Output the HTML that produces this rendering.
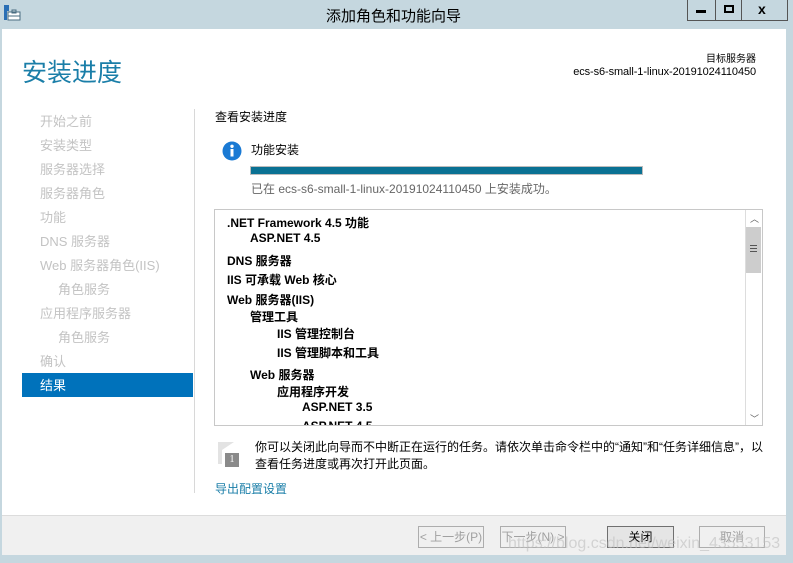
<!DOCTYPE html>
<html><head><meta charset="utf-8"><style>
*{margin:0;padding:0;box-sizing:border-box}
body{width:793px;height:563px;background:#c5d7df;position:relative;overflow:hidden;font-family:"Liberation Sans","Noto Sans CJK SC",sans-serif;font-size:12px;color:#000}
.a{position:absolute;white-space:nowrap}
#client{position:absolute;left:2px;top:29px;width:784px;height:526px;background:#fff}
#footer{position:absolute;left:2px;top:515px;width:784px;height:40px;background:#f0f0f0;border-top:1px solid #dcdcdc}
.nav{position:absolute;left:40px;font-size:13px;color:#c3c3c3;line-height:16px}
.btn{position:absolute;top:526px;height:22px;border:1px solid #adadad;background:#f0f0f0;font-size:12px;text-align:center;line-height:20px;color:#a0a0a0}
.t{position:absolute;font-weight:bold;font-size:12px;white-space:nowrap}
</style></head><body>
<svg class="a" style="left:4px;top:5px" width="17" height="16"><rect x="0" y="0" width="5" height="6" fill="#2a6fb5"/><rect x="0" y="6" width="3" height="9" fill="#2a6fb5"/><rect x="4" y="7" width="12" height="8" fill="#fff" stroke="#4a6d82"/><rect x="8" y="5" width="4" height="3" fill="none" stroke="#4a6d82"/><line x1="4" y1="11" x2="16" y2="11" stroke="#4a6d82"/></svg>
<div class="a" style="left:326px;top:5px;font-size:15px">添加角色和功能向导</div>
<div class="a" style="left:687px;top:0;width:101px;height:21px;border:1px solid #555;border-top:none;background:#c5d7df"></div>
<div class="a" style="left:715px;top:0;width:1px;height:21px;background:#555"></div>
<div class="a" style="left:741px;top:0;width:1px;height:21px;background:#555"></div>
<div class="a" style="left:696px;top:10px;width:10px;height:3px;background:#000"></div>
<div class="a" style="left:724px;top:5px;width:10px;height:8px;border:2px solid #000"></div>
<div class="a" style="left:758px;top:1px;font-size:14px;font-weight:bold">x</div>
<div id="client"></div>
<div class="a" style="left:22px;top:53px;font-size:25px;color:#1a7ea8">安装进度</div>
<div class="a" style="right:37px;top:54px;font-size:10px;line-height:12px;text-align:right">目标服务器</div>
<div class="a" style="right:37px;top:66px;font-size:11px;line-height:13px;letter-spacing:-0.1px">ecs-s6-small-1-linux-20191024110450</div>
<div class="nav" style="top:114px">开始之前</div>
<div class="nav" style="top:138px">安装类型</div>
<div class="nav" style="top:162px">服务器选择</div>
<div class="nav" style="top:186px">服务器角色</div>
<div class="nav" style="top:210px">功能</div>
<div class="nav" style="top:234px">DNS 服务器</div>
<div class="nav" style="top:258px">Web 服务器角色(IIS)</div>
<div class="nav" style="top:282px;left:58px">角色服务</div>
<div class="nav" style="top:306px">应用程序服务器</div>
<div class="nav" style="top:330px;left:58px">角色服务</div>
<div class="nav" style="top:354px">确认</div>
<div class="a" style="left:22px;top:373px;width:171px;height:24px;background:#0072bb"></div>
<div class="nav" style="top:378px;color:#fff">结果</div>
<div class="a" style="left:194px;top:109px;width:1px;height:384px;background:#d8d8d8"></div>
<div class="a" style="left:215px;top:108px">查看安装进度</div>
<svg class="a" style="left:222px;top:141px" width="20" height="20"><circle cx="10" cy="10" r="9.5" fill="#1a7ad4"/><rect x="8.5" y="8" width="3" height="7.5" fill="#fff"/><circle cx="10" cy="5.3" r="1.7" fill="#fff"/></svg>
<div class="a" style="left:251px;top:141px;font-size:12px">功能安装</div>
<div class="a" style="left:250px;top:166px;width:393px;height:9px;border:1px solid #bcbcbc;background:#0a7193"></div>
<div class="a" style="left:251px;top:180px;font-size:12px;color:#666">已在 ecs-s6-small-1-linux-20191024110450 上安装成功。</div>
<div class="a" style="left:214px;top:209px;width:549px;height:217px;border:1px solid #c8c8c8;background:#fff;overflow:hidden">
<div class="t" style="left:12px;top:4px">.NET Framework 4.5 功能</div>
<div class="t" style="left:35px;top:21px">ASP.NET 4.5</div>
<div class="t" style="left:12px;top:42px">DNS 服务器</div>
<div class="t" style="left:12px;top:61px">IIS 可承载 Web 核心</div>
<div class="t" style="left:12px;top:81px">Web 服务器(IIS)</div>
<div class="t" style="left:35px;top:98px">管理工具</div>
<div class="t" style="left:62px;top:115px">IIS 管理控制台</div>
<div class="t" style="left:62px;top:134px">IIS 管理脚本和工具</div>
<div class="t" style="left:35px;top:156px">Web 服务器</div>
<div class="t" style="left:62px;top:173px">应用程序开发</div>
<div class="t" style="left:87px;top:190px">ASP.NET 3.5</div>
<div class="t" style="left:87px;top:209px">ASP.NET 4.5</div>
<div class="a" style="left:530px;top:0;width:17px;height:215px;border-left:1px solid #ddd;background:#fff"></div>
<div class="a" style="left:531px;top:17px;width:15px;height:46px;background:#cdcdcd"></div>
<div class="a" style="left:535px;top:2px;font-size:9px;color:#606060">︿</div>
<div class="a" style="left:535px;top:202px;font-size:9px;color:#606060">﹀</div>
<div class="a" style="left:535px;top:35px;width:7px;height:7px;border-top:1px solid #555;border-bottom:1px solid #555"></div>
<div class="a" style="left:535px;top:38px;width:7px;height:1px;background:#555"></div>
</div>
<div class="a" style="left:218px;top:442px;width:4px;height:22px;background:#e3e3e3"></div>
<div class="a" style="left:222px;top:442px;width:0;height:0;border-top:8px solid #e3e3e3;border-right:12px solid transparent"></div>
<div class="a" style="left:225px;top:453px;width:14px;height:14px;background:#8a8a8a;color:#fff;font-size:10px;text-align:center;line-height:14px;font-family:'Liberation Serif',serif">1</div>
<div class="a" style="left:255px;top:439px;font-size:12px;line-height:17px">你可以关闭此向导而不中断正在运行的任务。请依次单击命令栏中的“通知”和“任务详细信息”，以<br>查看任务进度或再次打开此页面。</div>
<div class="a" style="left:215px;top:480px;font-size:12px;color:#1a7ea8">导出配置设置</div>
<div id="footer"></div>
<div class="btn" style="left:418px;width:66px">&lt; 上一步(P)</div>
<div class="btn" style="left:500px;width:66px">下一步(N) &gt;</div>
<div class="btn" style="left:607px;width:67px;color:#000;background:#e5e5e5;border-color:#707070">关闭</div>
<div class="btn" style="left:699px;width:66px">取消</div>
<div class="a" style="left:508px;top:535px;font-size:16px;color:rgba(190,190,190,0.6)">https://blog.csdn.net/weixin_43553153</div>
</body></html>
